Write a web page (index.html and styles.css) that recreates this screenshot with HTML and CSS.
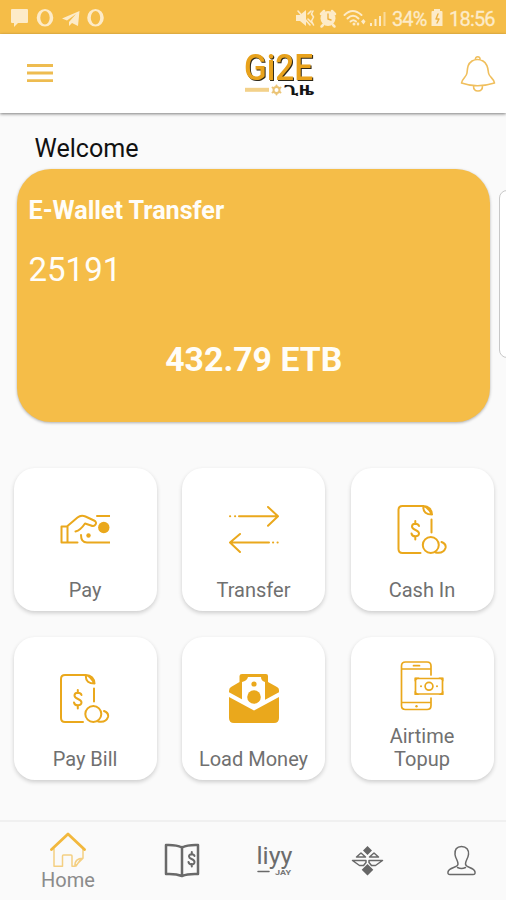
FILE: index.html
```html
<!DOCTYPE html>
<html lang="en">
<head>
<meta charset="utf-8">
<title>Gize</title>
<link rel="stylesheet" href="styles.css">
</head>
<body>
<div class="app">
  <div class="status">
    <svg class="notices" viewBox="0 0 110 34">
      <path class="soft" d="M12 9h15q1 0 1 1v12q0 1-1 1h-9l-4 4v-4h-2q-1 0-1-1V10q0-1 1-1zM62 18.500 79.500 11 78 26l-6-3-3 3v-4l7-8-9 6.500z"/>
      <path class="soft" fill-rule="evenodd" d="M45 9a8.300 8.800 0 1 0 0 17.600a8.300 8.800 0 1 0 0-17.600zm0 2a4.700 6.800 0 1 1 0 13.600a4.700 6.800 0 1 1 0-13.600zM95.500 9a8.300 8.800 0 1 0 0 17.600a8.300 8.800 0 1 0 0-17.600zm0 2a4.700 6.800 0 1 1 0 13.600a4.700 6.800 0 1 1 0-13.600z"/>
    </svg>
    <div class="system">
      <svg class="signals" viewBox="295 0 92 34">
        <path class="soft" d="M296 15h4l6-5v16l-6-5h-4zM370 26v-2h2v2z"/>
        <path class="soft-line" stroke-width="1.600" d="m298 11 12 14M308 14l3-3M308 19l4 4M313 11l-1.500 3 2 3-2 4 2 4"/>
        <circle class="soft" cx="328" cy="18.500" r="7.500"/>
        <path class="soft-line" stroke-width="2.500" d="m321 14 3-3m8 0 3 3m-12 11-1.500 1.500m11.500-1.500 1.500 1.500"/>
        <path class="cut" d="M328 14v5l3 1"/>
        <path class="soft-line" stroke-width="2" d="M344.500 15q8-8 17 0M347.500 18.500q5.500-5.500 11 0M350.500 21.500q3-2.500 5.500 0"/>
        <circle class="soft" cx="354" cy="24" r="1.500"/>
        <path class="soft" d="m363.500 19-2.500 2.500 2.500 3 2-3zM358 22l-1.500 2 1.500 2 1.500-2z"/>
        <path class="soft" d="M370 26v-3h2v3zM374.500 26v-7h2v7zM379 26v-10h2v10z"/>
        <path class="faint" d="M383.500 26V12h2v14z"/>
      </svg>
      <span class="percent">34%</span>
      <svg class="battery" viewBox="431 0 12 34">
        <path class="soft" d="M434 9h6v2h1.500q1 0 1 1v14h-11V12q0-1 1-1h1.500z"/>
        <path class="cut" d="M438 14l-2 5h3l-2 4"/>
      </svg>
      <span class="time">18:56</span>
    </div>
  </div>

  <header class="header">
    <svg class="menu" viewBox="0 0 26 20"><path d="M0 2.500h26M0 10h26M0 17.700h26"/></svg>
    <svg class="logo" viewBox="244 42 76 60" role="img" aria-label="Gize">
      <text class="wordmark" x="246" y="79.500" textLength="69" lengthAdjust="spacingAndGlyphs">Gi2E</text>
      <path class="bar" d="M247 89.800h24"/>
      <circle class="ring" cx="278.500" cy="90" r="3"/>
      <path class="ring" d="M278.500 85.500v1m0 7v1M274.500 87.500l.7.500m6.600 4 .7.500m0-5-.7.500m-6.600 4-.7.500"/>
      <text class="amharic" x="286" y="95" textLength="30" lengthAdjust="spacingAndGlyphs">ጊዜ</text>
    </svg>
    <svg class="bell" viewBox="460 55 36 38">
      <path d="M475.500 59.500a2.300 2.300 0 1 1 4.500 0M472 61q5.500-3 11 0c5 3 5 8 5.500 12 .5 4 5.500 5.500 6 10-11 3.500-23 3.500-33 0 .5-4.500 5-6 5.500-10 .500-5 .5-9 5-12zM473.500 86q0 5 4.500 5t4.500-5"/>
    </svg>
  </header>

  <main class="main">
    <h1 class="welcome">Welcome</h1>
    <section class="wallet">
      <h2 class="wallet-title">E-Wallet Transfer</h2>
      <div class="account">25191</div>
      <div class="balance">432.79 ETB</div>
    </section>

    <div class="tiles">
      <div class="tile">
        <svg class="icon" viewBox="60 505 50 50">
          <path class="line" d="M61.500 526.500h6v16h-6zM67.500 526l10-8.500q3.500-3 8-1l8.500 4q3 1.500 1.500 4-1.500 2.500-4.500 1l-6-2c-2 3-5 7-9.500 8M67.500 542.500h10M97 516h12.500M81 535q0 7.500 6 7.500h22.500"/>
          <circle class="gold" cx="103.800" cy="527.500" r="5.700"/><circle class="gold" cx="88.500" cy="535.500" r="2.200"/>
        </svg>
        <span class="label">Pay</span>
      </div>
      <div class="tile">
        <svg class="icon" viewBox="229 505 50 50">
          <path class="line" d="M239 516.300h38.500M268 507l10 9.300-10 9.500M269 542.500h-38.500M240 534l-10 8.500 10 9.500"/>
          <path class="line" d="M230 516.300h.2m4.800 0h.2M273 542.500h.2m4.300 0h.2"/>
        </svg>
        <span class="label">Transfer</span>
      </div>
      <div class="tile">
        <svg class="icon" viewBox="397.500 505 50 50">
          <g id="bill">
            <path class="line" d="M421 553h-18q-4 0-4-4v-39q0-4 4-4h21c5 0 8.500 4 8.500 8.500-5 0-9.500-2-8.500-8.500 4 1 6 4 8.500 8.500M432 519.500v13"/>
            <path class="line" d="M419.500 526c-1-3-7-3-7 .5 0 4 7 3 7 7 0 4-7 3.500-7.500 0M415.800 521v3m0 12.500v3"/>
            <circle class="line" cx="431.300" cy="545" r="8"/>
            <path class="line" d="M442 542q5 2 4 6-2 6-10 4.500"/>
          </g>
        </svg>
        <span class="label">Cash In</span>
      </div>
      <div class="tile">
        <svg class="icon" viewBox="398 505 50 50"><use href="#bill"/></svg>
        <span class="label">Pay Bill</span>
      </div>
      <div class="tile">
        <svg class="icon" viewBox="229 674 50 50">
          <path class="gold" d="M242 674h24q2 0 2 2v6l9 5q2 1 2 3v3L254 707l-25-13v-3q0-3 2-4l8.500-5v-6q0-2 2.500-2z"/>
          <path class="paper" d="M248 677h13q0 4 4 5v20l-11 6-12-6v-20q5-1 6-5z"/>
          <circle class="gold" cx="254" cy="684" r="2.600"/><circle class="gold" cx="254" cy="697" r="6.800"/>
          <path class="gold" d="m229 697 25 13.500 25-13.500v21q0 5-5 5h-40q-5 0-5-5z"/>
          <path class="seam" d="m228 693.500 26 14 26-14"/>
        </svg>
        <span class="label">Load Money</span>
      </div>
      <div class="tile">
        <svg class="icon" viewBox="397.500 661 50 50">
          <path class="line thin" d="M431.500 675v-9q0-4-4-4H406q-4 0-4 4v39.500q0 4 4 4h21.500q4 0 4-4V698M402 669h29.500M402 702.500h29.500M414 665.700h6"/>
          <circle class="gold" cx="417" cy="706.300" r="1.200"/>
          <path class="line thin" d="M416 678.500h27V694h-27z"/>
          <path class="gold" d="M415 677.500h5l-5 4zM444 677.500h-5l5 4zM415 695h5l-5-4zM444 695h-5l5-4z"/>
          <circle class="line thin" cx="429.500" cy="686.300" r="3.900"/>
          <circle class="gold" cx="421.500" cy="686.300" r="1"/><circle class="gold" cx="437.500" cy="686.300" r="1"/>
        </svg>
        <span class="label">Airtime Topup</span>
      </div>
    </div>
  </main>

  <nav class="nav">
    <div class="nav-item home">
      <svg class="house" viewBox="50 832 36 36">
        <path class="walls" d="M54 849v17.300h8.500V856q0-1 1-1h7.500q1 0 1 1v10.300h3l8-8V848M75 866c-.5-5 3-8 8-7.700M76 866l5-7"/>
        <path class="roof" d="m51.500 849.500 16.500-15.500 16.500 15.500"/>
      </svg>
      <span class="nav-label">Home</span>
    </div>
    <div class="nav-item">
      <svg class="nav-icon" viewBox="164 842 36 36">
        <path class="grey heavy" d="M182 847.500q-6-3-16-2.500v29q10-.5 16 2 6-2.500 16-2v-29q-10-.5-16 2.500zM182 847v29"/>
        <path class="grey" d="M194.500 856c-.5-2.500-5.500-2.500-5.500.5 0 3 5.500 2 5.500 5.500s-5.500 3-6 0M191.800 852v2.500m0 9.500v2.500"/>
      </svg>
    </div>
    <div class="nav-item">
      <svg class="nav-icon" viewBox="256 842 36 36">
        <text class="liyu" x="256.500" y="864" textLength="36" lengthAdjust="spacingAndGlyphs">liyy</text>
        <path class="grey slim" d="M258 871.500h11"/>
        <text class="pay" x="275" y="875" textLength="16" lengthAdjust="spacingAndGlyphs">JAY</text>
      </svg>
    </div>
    <div class="nav-item">
      <svg class="nav-icon" viewBox="350 842 36 36">
        <path class="solid" d="m367.500 846 4.500 4.500-4.500 4.500-4.500-4.500zM367.500 864l5.800 5.700-5.800 5.800-5.800-5.800z"/>
        <path class="grey slim" d="M352.500 860.500h13.500v2l-2.500 3h-4zM382.500 860.500H369v2l2.500 3h4zM356.500 857l4.500-4 4.500 4zM369.500 857l4.500-4 4.500 4z"/>
      </svg>
    </div>
    <div class="nav-item">
      <svg class="nav-icon" viewBox="442.500 842 36 36">
        <path class="grey slim" d="M461 846.500c-5 0-7 3.500-6.500 8 .5 4 3 6 3 9.500 0 4-9 3-10 8q-.500 2.500 2 2.500h23q2.500 0 2-2.500c-1-5-9.500-4-9.500-8 0-3.500 2.500-5.500 3-9.500.500-4.500-2-8-7-8zM457 867.500q4 2 8 0"/>
      </svg>
    </div>
  </nav>
  <div class="edge-handle"></div>
</div>
</body>
</html>
```
FILE: styles.css
```css
* { box-sizing: border-box; }
body { margin: 0; font-family: Roboto, "Liberation Sans", sans-serif; background: #fafafa; }
.app { position: relative; width: 506px; height: 900px; overflow: hidden; display: flex; flex-direction: column; background: #fafafa; }
svg { display: block; flex: none; fill: none; stroke-linecap: round; stroke-linejoin: round; }

.status { height: 34px; flex: none; display: flex; justify-content: space-between; background: #f5bd48; color: #fdebc8; }
.notices { width: 110px; height: 34px; }
.system { display: flex; align-items: center; padding: 3px 11px 0 0; }
.system svg { height: 34px; margin-top: -3px; }
.signals { width: 92px; }
.percent { width: 39px; margin-left: 5px; font-size: 20px; letter-spacing: -0.9px; -webkit-text-stroke: .3px currentColor; }
.battery { width: 12px; }
.time { width: 46px; margin-left: 6px; font-size: 20px; letter-spacing: -0.8px; white-space: nowrap; -webkit-text-stroke: .3px currentColor; }
.soft { fill: #fdebc8; }
.faint { fill: #fadb9c; }
.soft-line { stroke: #fdebc8; }
.cut { stroke: #eeb23f; stroke-width: 1.4; }

.header { height: 79px; flex: none; display: flex; align-items: flex-start; justify-content: space-between; padding: 0 10px 0 27px; background: #fff; box-shadow: 0 1px 3px rgba(0, 0, 0, .5); }
.menu { width: 26px; height: 20px; margin-top: 29px; stroke: #eebc50; stroke-width: 2.8; stroke-linecap: butt; }
.logo { width: 76px; height: 60px; margin: 8px 0 0 47px; overflow: visible; }
.wordmark { font: 500 36px Roboto, sans-serif; fill: #e8a21c; filter: drop-shadow(1.2px 1px 0 #2e2819); }
.amharic { font: 700 14px "Noto Sans Ethiopic", "Noto Sans", sans-serif; fill: #151515; }
.gold { fill: #eaa81c; }
.bar { stroke: #f3d18a; stroke-width: 4; stroke-linecap: butt; }
.ring { stroke: #ebc476; stroke-width: 2; }
.bell { width: 36px; height: 38px; margin-top: 21px; stroke: #f0bf5d; stroke-width: 1.6; }

.main { flex: 1; padding: 20px 12px 0 13.5px; }
.welcome { margin: 0 0 0 21px; height: 36px; font-size: 25.1px; font-weight: 400; line-height: 32px; color: #111; }
.wallet { width: 473.500px; height: 253px; margin-left: 3px; padding: 26px 12px 0; border-radius: 34px; background: #f5bd48; box-shadow: 0 1px 3px rgba(0, 0, 0, .3); color: #fffdf8; }
.wallet-title { margin: 0; font-size: 25.2px; font-weight: 700; line-height: 32px; letter-spacing: -.02px; }
.account { margin-top: 22px; font-size: 33px; line-height: 42px; }
.balance { margin-top: 48px; padding-left: 1px; font-size: 33.800px; font-weight: 700; line-height: 42px; text-align: center; }

.tiles { display: grid; grid-template-columns: repeat(3, 143px); grid-auto-rows: 143px; gap: 26px 25.5px; margin-top: 46px; }
.tile { display: flex; flex-direction: column; align-items: center; justify-content: space-between; padding: 37px 20px 9px; border-radius: 21px; background: #fff; box-shadow: 0 2px 4px rgba(0, 0, 0, .18); }
.tile:last-child { padding-top: 24px; }
.icon { width: 50px; height: 50px; }
.label { margin: 0 -20px; max-width: 130px; font-size: 20px; line-height: 23px; text-align: center; color: #707070; }
.tile:last-child .label { width: 90px; }
.line { stroke: #eaa81c; stroke-width: 2; }
.thin { stroke-width: 1.7; }
.paper { fill: #fff; }
.seam { stroke: #fff; stroke-width: 3; }

.nav { height: 80px; flex: none; display: grid; grid-template-columns: 136px 92px 92px 96px 90px; border-top: 2px solid #f0f0f0; background: #fafafa; }
.nav-item { display: flex; flex-direction: column; align-items: center; padding-top: 20px; }
.home { padding-top: 10px; }
.house { width: 36px; height: 36px; }
.nav-label { font-size: 20px; line-height: 24px; color: #8b8b8b; }
.nav-icon { width: 36px; height: 36px; overflow: visible; }
.walls { stroke: #f4cf82; stroke-width: 1.5; }
.roof { stroke: #f2b83d; stroke-width: 2.8; }
.grey { stroke: #696969; stroke-width: 2; }
.heavy { stroke-width: 2.5; }
.slim { stroke-width: 1.5; }
.solid { fill: #666; }
.liyu { font: 400 23px Roboto, sans-serif; fill: #6c6c6c; }
.pay { font: 700 6.5px Roboto, sans-serif; fill: #777; }

.edge-handle { position: absolute; left: 499px; top: 190px; width: 16px; height: 168px; border: 1px solid #c8c8c8; border-radius: 8px; background: #fff; }
```
